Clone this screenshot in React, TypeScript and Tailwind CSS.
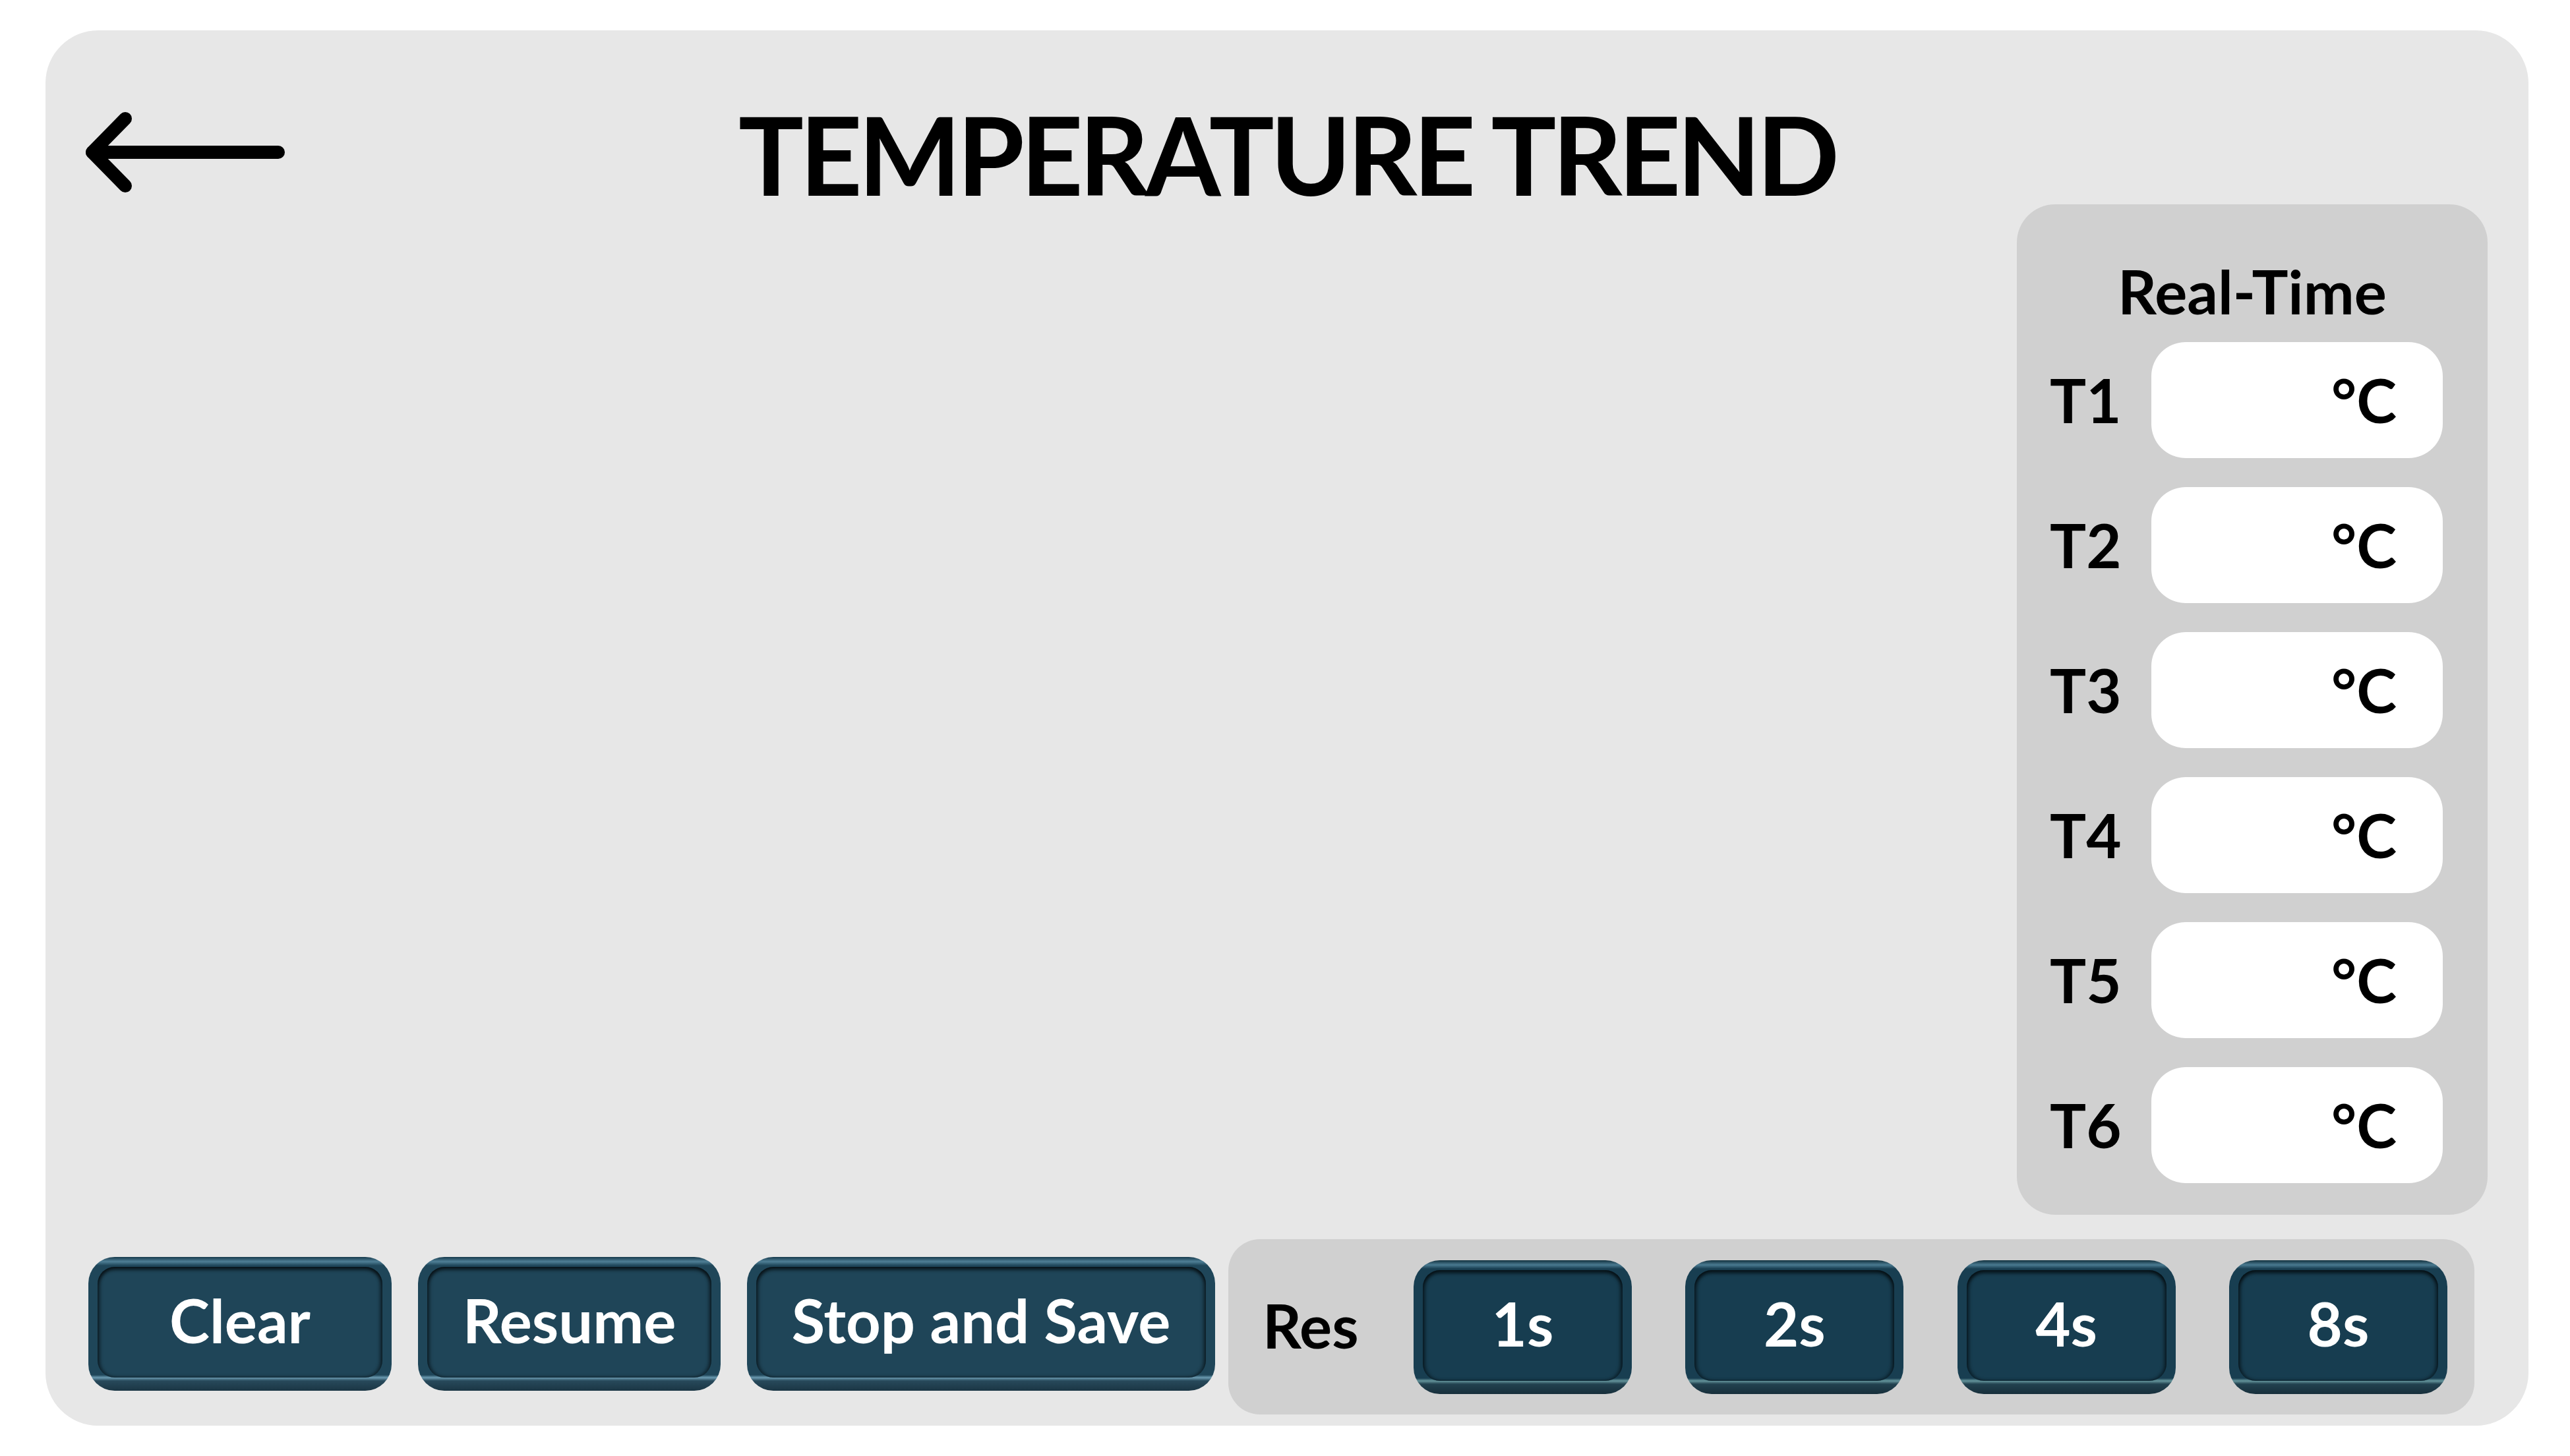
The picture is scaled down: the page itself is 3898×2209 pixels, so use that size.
import React from 'react';

const font = "font-['Lato','Open_Sans',sans-serif]";

const actionRing =
    'bg-[linear-gradient(to_bottom,#163a4c_0px,#4f7f96_7px,#1f4659_13px,#1f4659_calc(100%_-_24px),#6b9bb1_calc(100%_-_20px),#27495b_calc(100%_-_15px),#1b3644_100%)]';
const resRing =
    'bg-[linear-gradient(to_bottom,#12313f_0px,#4a7a90_7px,#183e51_13px,#183e51_calc(100%_-_24px),#64949b_calc(100%_-_20px),#22414f_calc(100%_-_15px),#172f3b_100%)]';
const innerShade =
    'shadow-[inset_0_5px_5px_rgba(0,0,0,0.55),inset_4px_0_5px_rgba(0,0,0,0.4),inset_-4px_0_5px_rgba(0,0,0,0.4)]';

type BtnProps = { label: string; width: string; dark?: boolean };

const BevelButton: React.FC<BtnProps> = ({ label, width, dark }) => (
    <div className={`${width} h-[203px] shrink-0 rounded-[40px] px-[14px] pt-[15px] pb-[20px] ${dark ? resRing : actionRing}`}>
        <div
            className={`h-full rounded-[26px] flex items-center justify-center ${innerShade} ${dark ? 'bg-[#173d50]' : 'bg-[#1f4558]'}`}
        >
            <span className={`${font} font-bold text-white text-[92px] leading-none pb-[6px]`}>{label}</span>
        </div>
    </div>
);

const App: React.FC = () => {
    const sensors = ['T1', 'T2', 'T3', 'T4', 'T5', 'T6'];
    const resolutions = ['1s', '2s', '4s', '8s'];

    return (
        <div className={`w-[3898px] h-[2209px] bg-white pt-[46px] pl-[69px] ${font}`}>
            <div className="w-[3766px] h-[2117px] bg-[#e7e7e7] rounded-[80px] flex flex-col">
                {/* Header */}
                <div className="h-[264px] shrink-0 grid grid-cols-[1fr_auto_1fr]">
                    <div className="pl-[51px] pt-[117px]">
                        <svg width="322" height="136" viewBox="0 0 322 136" fill="none">
                            <path d="M20 68 H302" stroke="black" strokeWidth="20" strokeLinecap="round" />
                            <path d="M70 17 L20 68 L70 119" stroke="black" strokeWidth="20" strokeLinecap="round" strokeLinejoin="round" />
                        </svg>
                    </div>
                    <h1 className="pt-[128px] text-[165px] leading-[118px] font-bold text-black tracking-[-6px] whitespace-nowrap">
                        TEMPERATURE TREND
                    </h1>
                    <div />
                </div>

                {/* Chart area + real-time panel */}
                <div className="flex h-[1533px] shrink-0">
                    <div className="flex-1" />
                    <div className="w-[714px] mr-[62px] bg-[#d0d0d0] rounded-[58px] pt-[86px] pb-[48px] flex flex-col">
                        <div className="text-center text-[92px] leading-[92px] font-bold text-black">Real-Time</div>
                        <div className="mt-[31px] flex flex-col gap-[44px]">
                            {sensors.map((s) => (
                                <div key={s} className="flex items-center h-[176px]">
                                    <span className="w-[204px] shrink-0 pl-[50px] text-[92px] leading-none font-bold text-black">{s}</span>
                                    <div className="w-[442px] h-[176px] bg-white rounded-[52px] flex items-center justify-end pr-[70px]">
                                        <span className="text-[92px] leading-none font-bold text-black">°C</span>
                                    </div>
                                </div>
                            ))}
                        </div>
                    </div>
                </div>

                {/* Bottom controls */}
                <div className="mt-[37px] flex pl-[65px] pr-[82px]">
                    <div className="mt-[27px] flex gap-[40px] self-start">
                        <BevelButton label="Clear" width="w-[460px]" />
                        <BevelButton label="Resume" width="w-[459px]" />
                        <BevelButton label="Stop and Save" width="w-[710px]" />
                    </div>
                    <div className="ml-auto w-[1890px] h-[266px] bg-[#d0d0d0] rounded-[48px] flex items-center pl-[52px] pr-[41px]">
                        <span className="w-[229px] text-[92px] leading-none font-bold text-black pb-[4px]">Res</span>
                        <div className="flex-1 flex justify-between">
                            {resolutions.map((r) => (
                                <BevelButton key={r} label={r} width="w-[331px]" dark />
                            ))}
                        </div>
                    </div>
                </div>
            </div>
        </div>
    );
};

export default App;
